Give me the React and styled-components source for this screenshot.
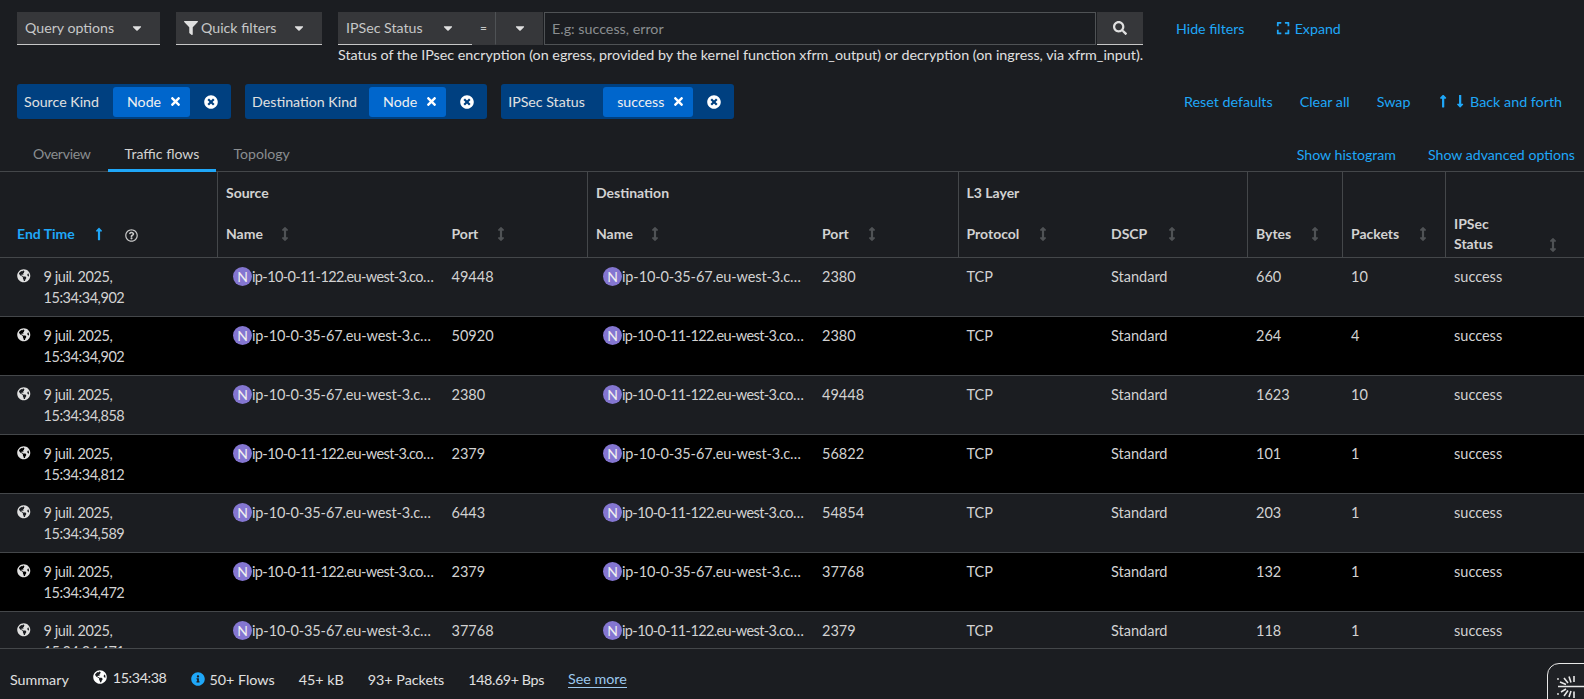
import React from 'react';
import styled, { createGlobalStyle } from 'styled-components';
import {
  FaCaretDown, FaFilter, FaSearch, FaExpand, FaTimes, FaTimesCircle, FaLongArrowAltUp,
  FaLongArrowAltDown, FaRegQuestionCircle, FaArrowsAltV, FaGlobeAmericas, FaInfoCircle,
} from 'react-icons/fa';

const Global = createGlobalStyle`
  html, body { margin: 0; height: 100%; overflow: hidden; background: #1b1d21; }
  * { box-sizing: border-box; }
  body { font-family: Lato, "Noto Sans", sans-serif; font-size: 14.3px; color: #e0e0e0; }
`;

const Page = styled.div`
  height: 100vh;
  display: flex;
  flex-direction: column;
  position: relative;
  overflow: hidden;
`;

const Toolbar = styled.div`
  display: flex;
  align-items: flex-start;
  padding: 12px 0 0 17px;
`;

const Select = styled.div`
  height: 32.5px;
  width: ${({ $w }) => $w}px;
  margin-right: ${({ $mr }) => $mr || 0}px;
  flex: none;
  display: flex;
  align-items: center;
  padding: 0 8px;
  background: #36373a;
  border-bottom: 1px solid ${({ $noLine }) => ($noLine ? '#36373a' : '#c7c7c7')};
  border-right: ${({ $sep }) => ($sep ? '1px solid #4f5255' : 'none')};
  color: #c6c7c8;
  font-size: 14.2px;
  svg.caret { margin-left: auto; margin-right: ${({ $cr }) => $cr || 10}px; font-size: 14px; color: #e0e0e0; }
`;

const FilterIcon = styled(FaFilter)`
  font-size: 14px;
  color: #e0e0e0;
  margin-right: 3px;
`;

const SearchGroup = styled.div`
  display: flex;
  flex-direction: column;
  width: 805px;
  flex: none;
`;

const SearchRow = styled.div`
  display: flex;
`;

const Equal = styled(Select)`
  justify-content: center;
  font-size: 12px;
  padding: 0;
`;

const Input = styled.div`
  flex: 1;
  height: 32.5px;
  margin-left: 1px;
  border: 1px solid #4f5255;
  padding: 0 7px;
  display: flex;
  align-items: center;
  color: #8a8d90;
`;

const SearchButton = styled.div`
  width: 46px;
  height: 32.5px;
  margin-left: 1px;
  background: #36373a;
  border-bottom: 1px solid #c7c7c7;
  display: flex;
  align-items: center;
  justify-content: center;
  color: #e0e0e0;
  font-size: 14px;
`;

const Help = styled.div`
  line-height: 20px;
  color: #e0e0e0;
  white-space: nowrap;
  margin-top: 0.5px;
`;

const Link = styled.span`
  color: #1fa7f8;
  white-space: nowrap;
  display: inline-flex;
  align-items: center;
  gap: ${({ $gap }) => $gap || 0}px;
  margin-left: ${({ $ml }) => $ml || 0}px;
`;

const ToolLinks = styled.div`
  display: flex;
  height: 32.5px;
  align-items: center;
  margin-left: 33px;
  font-size: 14.2px;
`;

const ChipBar = styled.div`
  display: flex;
  align-items: center;
  margin-top: 19px;
  padding: 0 22px 0 17px;
`;

const ChipGroup = styled.div`
  height: 35px;
  display: flex;
  align-items: center;
  background: #004080;
  border-radius: 3px;
  padding: 0 13px 0 7px;
  margin-right: 14px;
  flex: none;
  font-size: 14.2px;
`;

const ChipLabel = styled.span`
  width: ${({ $w }) => $w}px;
  white-space: nowrap;
`;

const Chip = styled.div`
  height: 30px;
  background: #0066cc;
  border-radius: 3px;
  padding: 0 8px 0 14px;
  display: flex;
  align-items: center;
  gap: 8px;
  margin-right: 14px;
  color: #f0f0f0;
  svg { font-size: 13px; color: #fff; }
`;

const GroupClose = styled(FaTimesCircle)`
  font-size: 14px;
  color: #fff;
`;

const ChipLinks = styled.div`
  margin-left: auto;
  display: flex;
  align-items: center;
`;

const ArrowPair = styled.span`
  display: inline-flex;
  gap: 2px;
`;

const TabBar = styled.div`
  display: flex;
  align-items: center;
  height: 38px;
  margin-top: 15px;
  padding: 0 9px 0 16px;
  border-bottom: 1px solid #44474a;
`;

const Tab = styled.div`
  height: 38px;
  margin-bottom: -1px;
  padding: 0 17px;
  display: flex;
  align-items: center;
  font-size: 14.1px;
  letter-spacing: ${({ $tight }) => ($tight ? '-0.3px' : '0')};
  color: ${({ $active }) => ($active ? '#d2d2d2' : '#8a8d90')};
  box-shadow: ${({ $active }) => ($active ? 'inset 0 -3px 0 #1fa7f8' : 'none')};
`;

const TabLinks = styled.div`
  margin-left: auto;
  margin-top: 3px;
  display: flex;
  gap: 32px;
  font-size: 14.15px;
`;

const TableWrap = styled.div`
  flex: 1;
  min-height: 0;
  overflow: hidden;
`;

const Table = styled.table`
  width: 1584px;
  table-layout: fixed;
  border-collapse: separate;
  border-spacing: 0;
`;

const GroupHead = styled.th`
  height: 42px;
  padding: 0 8px 2px;
  text-align: left;
  font-weight: 700;
  font-size: 14px;
  color: #d2d2d2;
  border-left: ${({ $line }) => ($line ? '1px solid #44474a' : 'none')};
`;

const Head = styled.th`
  height: 44px;
  padding: 0 8px 3px ${({ $first, $line }) => ($first ? 17 : $line ? 8 : 9)}px;
  text-align: left;
  font-weight: 700;
  font-size: 14px;
  line-height: 20px;
  color: ${({ $sorted }) => ($sorted ? '#1fa7f8' : '#d2d2d2')};
  border-left: ${({ $line }) => ($line ? '1px solid #44474a' : 'none')};
  border-bottom: 1px solid #44474a;
`;

const HeadInner = styled.span`
  display: flex;
  align-items: ${({ $end }) => ($end ? 'flex-end' : 'center')};
`;

const SortIcon = styled(FaArrowsAltV)`
  margin-left: ${({ $gap }) => $gap || 15}px;
  margin-bottom: ${({ $lift }) => $lift || 0}px;
  font-size: 14px;
  flex: none;
  color: #4f5255;
`;

const SortedIcon = styled(FaLongArrowAltUp)`
  margin-left: 17px;
  font-size: 14px;
  flex: none;
  color: #1fa7f8;
`;

const HelpIcon = styled(FaRegQuestionCircle)`
  font-size: 13px;
  margin-left: 19px;
  margin-top: 3px;
  color: #c7c7c7;
`;

const Row = styled.tr`
  background: ${({ $dark }) => ($dark ? '#000' : '#1b1d21')};
`;

const Cell = styled.td`
  height: 59px;
  vertical-align: top;
  padding: 8px 8px 0 9px;
  line-height: 21px;
  font-size: 14.5px;
  color: #d2d2d2;
  border-bottom: 1px solid #44474a;
`;

const TimeCell = styled(Cell)`
  padding-left: 17px;
`;

const TimeWrap = styled.div`
  display: flex;
  gap: 13px;
  letter-spacing: -0.45px;
  svg { flex: none; margin-top: 3px; font-size: 13.5px; color: #e0e0e0; }
`;

const ResourceCell = styled(Cell)`
  padding-left: 16px;
`;

const Resource = styled.div`
  display: flex;
  align-items: center;
`;

const Avatar = styled.span`
  width: 19px;
  height: 19px;
  flex: none;
  border-radius: 50%;
  background: #8476d1;
  color: #f0f0f0;
  font-size: 14px;
  display: flex;
  align-items: center;
  justify-content: center;
`;

const ResourceName = styled.span`
  overflow: hidden;
  text-overflow: ellipsis;
  white-space: nowrap;
  letter-spacing: ${({ $short }) => ($short ? '-0.62px' : '-0.12px')};
`;

const Footer = styled.div`
  height: 51px;
  flex: none;
  display: flex;
  align-items: center;
  padding: 10px 0 0 10px;
  border-top: 1px solid #44474a;
  color: #e0e0e0;
  font-size: 14.3px;
`;

const FootItem = styled.span`
  display: inline-flex;
  align-items: center;
  gap: ${({ $gap }) => $gap || 6}px;
  margin-right: 24px;
  white-space: nowrap;
  letter-spacing: ${({ $tight }) => ($tight ? '-0.4px' : '0')};
  transform: translateY(${({ $up }) => ($up ? -2 : 0)}px);
  svg { font-size: 14px; color: ${({ $blue }) => ($blue ? '#1fa7f8' : '#fff')}; }
`;

const SeeMore = styled.span`
  color: #9cc8ee;
  border-bottom: 1px solid #9cc8ee;
  line-height: 17px;
`;

const Assistant = styled.div`
  position: absolute;
  left: 1547px;
  top: 663px;
  width: 70px;
  height: 70px;
  border: 1.5px solid #e8e8e8;
  border-radius: 12px;
  background: #1f2125;
`;

const rows = [
  ['15:34:34,902', 'ip-10-0-11-122', 49448, 'ip-10-0-35-67', 2380, 660, 10],
  ['15:34:34,902', 'ip-10-0-35-67', 50920, 'ip-10-0-11-122', 2380, 264, 4],
  ['15:34:34,858', 'ip-10-0-35-67', 2380, 'ip-10-0-11-122', 49448, 1623, 10],
  ['15:34:34,812', 'ip-10-0-11-122', 2379, 'ip-10-0-35-67', 56822, 101, 1],
  ['15:34:34,589', 'ip-10-0-35-67', 6443, 'ip-10-0-11-122', 54854, 203, 1],
  ['15:34:34,472', 'ip-10-0-11-122', 2379, 'ip-10-0-35-67', 37768, 132, 1],
  ['15:34:34,471', 'ip-10-0-35-67', 37768, 'ip-10-0-11-122', 2379, 118, 1],
];

const widths = [217, 225.5, 144.5, 226, 144.5, 144.5, 145, 95, 103, 139];

const host = (name) => `${name}.eu-west-3.compute.internal`;

const Sunburst = () => (
  <svg width="40" height="36" viewBox="0 0 40 36" style={{ position: 'absolute', left: 8, top: 12 }}>
    <g stroke="#e8e8e8" strokeWidth="1.6" fill="none">
      <path d="M2 10.5H36" />
      <path d="M18 -1V6M13 0.5L15 6.5M8 2L12 7M4 6L10 8.5" />
      <path d="M10 13L5 16M12 14.5L8 20M15 15L13 21M18 15.5V22" />
    </g>
    <circle cx="2" cy="3" r="0.9" fill="#e8e8e8" />
    <circle cx="2" cy="18" r="0.9" fill="#e8e8e8" />
  </svg>
);

const FilterChip = ({ label, labelWidth, value }) => (
  <ChipGroup>
    <ChipLabel $w={labelWidth}>{label}</ChipLabel>
    <Chip>
      {value}
      <FaTimes />
    </Chip>
    <GroupClose />
  </ChipGroup>
);

const NodeName = ({ name }) => (
  <Resource>
    <Avatar>N</Avatar>
    <ResourceName $short={name.includes('11-122')}>{host(name)}</ResourceName>
  </Resource>
);

export default function App() {
  return (
    <Page>
      <Global />
      <Toolbar>
        <Select $w={143} $mr={16} $cr={8}>
          Query options
          <FaCaretDown className="caret" />
        </Select>
        <Select $w={146} $mr={16} $cr={8}>
          <FilterIcon />
          Quick filters
          <FaCaretDown className="caret" />
        </Select>
        <SearchGroup>
          <SearchRow>
            <Select $w={134} $cr={9}>
              IPSec Status
              <FaCaretDown className="caret" />
            </Select>
            <Equal $w={24} $noLine $sep>=</Equal>
            <Select $w={47} $noLine $cr={8}>
              <FaCaretDown className="caret" />
            </Select>
            <Input>E.g: success, error</Input>
            <SearchButton><FaSearch /></SearchButton>
          </SearchRow>
          <Help>Status of the IPsec encryption (on egress, provided by the kernel function xfrm_output) or decryption (on ingress, via xfrm_input).</Help>
        </SearchGroup>
        <ToolLinks>
          <Link>Hide filters</Link>
          <Link $ml={32} $gap={4}><FaExpand />Expand</Link>
        </ToolLinks>
      </Toolbar>

      <ChipBar>
        <FilterChip label="Source Kind" labelWidth={89} value="Node" />
        <FilterChip label="Destination Kind" labelWidth={117} value="Node" />
        <FilterChip label="IPSec Status" labelWidth={95} value="success" />
        <ChipLinks>
          <Link>Reset defaults</Link>
          <Link $ml={27}>Clear all</Link>
          <Link $ml={27}>Swap</Link>
          <Link $ml={26} $gap={3}>
            <ArrowPair><FaLongArrowAltUp /><FaLongArrowAltDown /></ArrowPair>
            Back and forth
          </Link>
        </ChipLinks>
      </ChipBar>

      <TabBar>
        <Tab $tight>Overview</Tab>
        <Tab $active>Traffic flows</Tab>
        <Tab>Topology</Tab>
        <TabLinks>
          <Link>Show histogram</Link>
          <Link>Show advanced options</Link>
        </TabLinks>
      </TabBar>

      <TableWrap>
        <Table>
          <colgroup>
            {widths.map((w, i) => <col key={i} width={w} />)}
          </colgroup>
          <thead>
            <tr>
              <GroupHead />
              <GroupHead $line colSpan={2}>Source</GroupHead>
              <GroupHead $line colSpan={2}>Destination</GroupHead>
              <GroupHead $line colSpan={2}>L3 Layer</GroupHead>
              <GroupHead $line />
              <GroupHead $line />
              <GroupHead $line />
            </tr>
            <tr>
              <Head $first $sorted>
                <HeadInner>End Time<SortedIcon /><HelpIcon /></HeadInner>
              </Head>
              <Head $line><HeadInner>Name<SortIcon /></HeadInner></Head>
              <Head><HeadInner>Port<SortIcon $gap={16} /></HeadInner></Head>
              <Head $line><HeadInner>Name<SortIcon /></HeadInner></Head>
              <Head><HeadInner>Port<SortIcon $gap={16} /></HeadInner></Head>
              <Head $line><HeadInner>Protocol<SortIcon $gap={17} /></HeadInner></Head>
              <Head><HeadInner>DSCP<SortIcon $gap={18} /></HeadInner></Head>
              <Head $line><HeadInner>Bytes<SortIcon $gap={17} /></HeadInner></Head>
              <Head $line><HeadInner>Packets<SortIcon $gap={17} /></HeadInner></Head>
              <Head $line>
                <HeadInner $end><span>IPSec<br />Status</span><SortIcon $gap={53} $lift={2} /></HeadInner>
              </Head>
            </tr>
          </thead>
          <tbody>
            {rows.map((r, i) => (
              <Row key={i} $dark={i % 2 === 1}>
                <TimeCell>
                  <TimeWrap>
                    <FaGlobeAmericas />
                    <div>9 juil. 2025,<br />{r[0]}</div>
                  </TimeWrap>
                </TimeCell>
                <ResourceCell><NodeName name={r[1]} /></ResourceCell>
                <Cell>{r[2]}</Cell>
                <ResourceCell><NodeName name={r[3]} /></ResourceCell>
                <Cell>{r[4]}</Cell>
                <Cell>TCP</Cell>
                <Cell>Standard</Cell>
                <Cell>{r[5]}</Cell>
                <Cell>{r[6]}</Cell>
                <Cell>success</Cell>
              </Row>
            ))}
          </tbody>
        </Table>
      </TableWrap>

      <Footer>
        <FootItem>Summary</FootItem>
        <FootItem $up $tight><FaGlobeAmericas />15:34:38</FootItem>
        <FootItem $blue $gap={5}><FaInfoCircle />50+ Flows</FootItem>
        <FootItem>45+ kB</FootItem>
        <FootItem>93+ Packets</FootItem>
        <FootItem $tight>148.69+ Bps</FootItem>
        <SeeMore>See more</SeeMore>
      </Footer>

      <Assistant><Sunburst /></Assistant>
    </Page>
  );
}
